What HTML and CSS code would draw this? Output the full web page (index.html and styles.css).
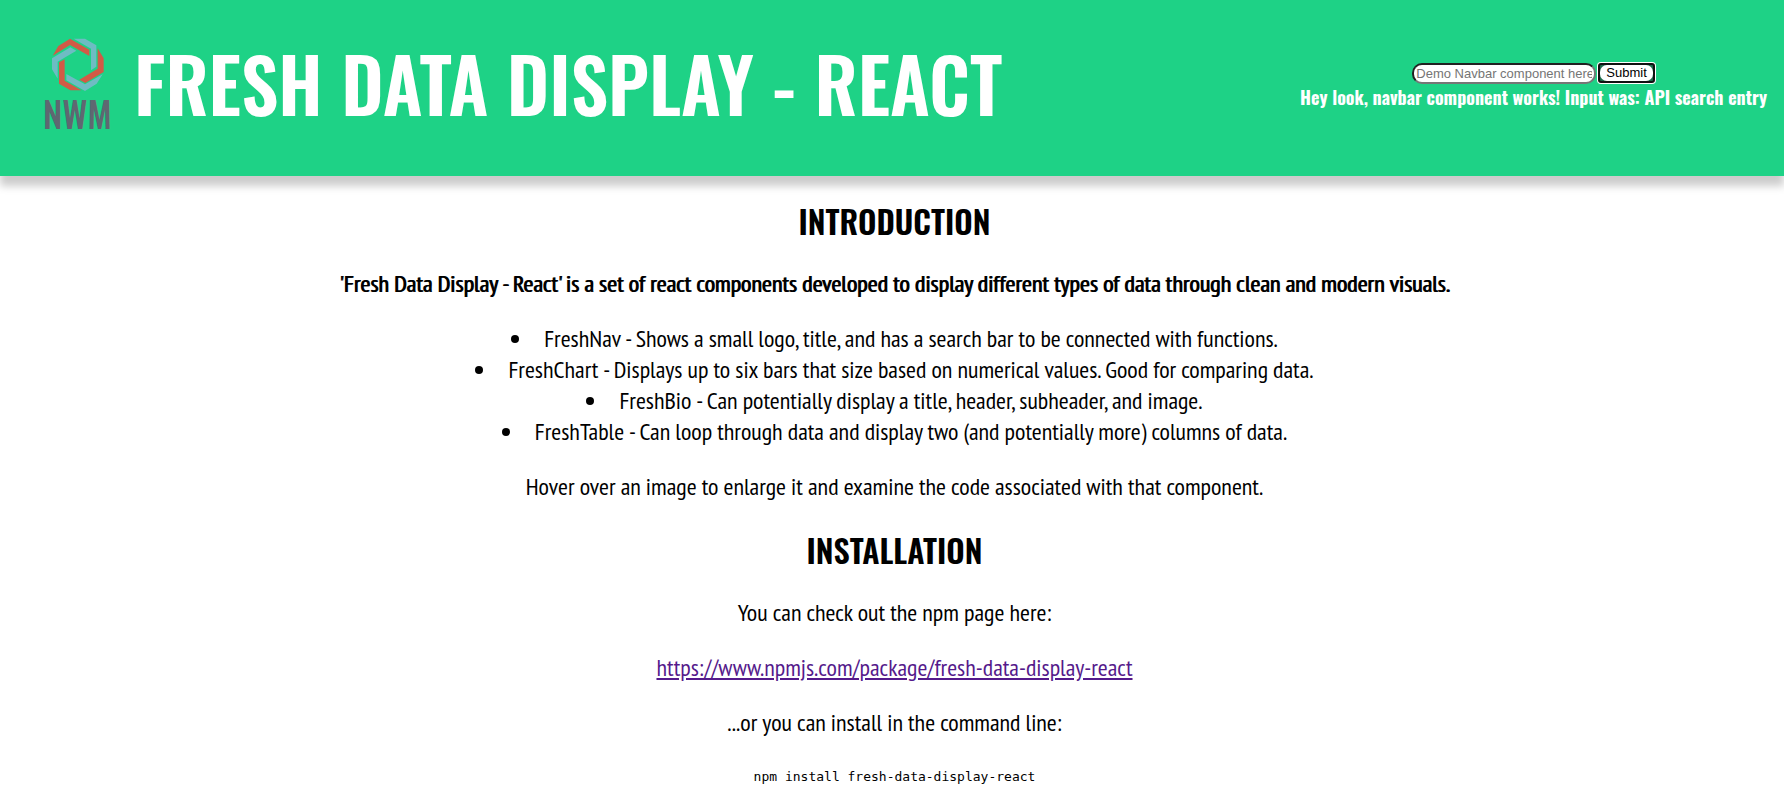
FILE: index.html
```html
<!DOCTYPE html>
<html lang="en">
<head>
<meta charset="utf-8">
<title>Fresh Data Display - React</title>
<link rel="stylesheet" href="styles.css">
</head>
<body>
<header class="navbar">
  <svg class="logo" viewBox="124 110 216 288" role="img" aria-label="NWM">
    <g fill="#d25a46">
      <path d="M159 166 176 137 211 115 269 148V167L211 134Z"/>
      <path d="M178 186 195 177V241L245 270H212L178 250Z"/>
      <path d="M294 144 312 174V215L257 248 239 238 294 205Z"/>
    </g>
    <g fill="#6ebcc3">
      <path d="M157 174 212 141 230 151 174 184V235L157 207Z"/>
      <path d="M200 221 256 252 309 222 291 250 256 272 200 240Z"/>
      <path d="M222 115H256L290 135V199L274 210V145Z"/>
    </g>
    <text class="logo-text" x="233" y="386" text-anchor="middle">NWM</text>
  </svg>
  <h1 class="title">FRESH DATA DISPLAY - REACT</h1>
  <div class="search">
    <form class="search-form">
      <input class="search-input" type="text" aria-label="Search" placeholder="Demo Navbar component here">
      <button class="search-button" type="button"><span class="search-button-face">Submit</span></button>
    </form>
    <p class="search-result">Hey look, navbar component works! Input was: API search entry</p>
  </div>
</header>
<main class="content">
  <h2 class="heading">INTRODUCTION</h2>
  <p class="text lead">'Fresh Data Display - React' is a set of react components developed to display different types of data through clean and modern visuals.</p>
  <ul class="text list">
    <li>FreshNav - Shows a small logo, title, and has a search bar to be connected with functions.</li>
    <li>FreshChart - Displays up to six bars that size based on numerical values. Good for comparing data.</li>
    <li>FreshBio - Can potentially display a title, header, subheader, and image.</li>
    <li>FreshTable - Can loop through data and display two (and potentially more) columns of data.</li>
  </ul>
  <p class="text">Hover over an image to enlarge it and examine the code associated with that component.</p>
  <h2 class="heading">INSTALLATION</h2>
  <p class="text">You can check out the npm page here:</p>
  <p class="text"><a class="link" href="https://www.npmjs.com/package/fresh-data-display-react">https://www.npmjs.com/package/fresh-data-display-react</a></p>
  <p class="text">...or you can install in the command line:</p>
  <code class="command">npm install fresh-data-display-react</code>
</main>
</body>
</html>
```

FILE: styles.css
```css
* { box-sizing: border-box; }

body {
  margin: 0;
  background: #fff;
  color: #000;
  font-family: "PT Sans Narrow", "Liberation Sans Narrow", "Liberation Sans", sans-serif;
}

.navbar {
  display: flex;
  align-items: center;
  min-height: 176px;
  padding: 0 17px 10px 41px;
  background: #1ed286;
  box-shadow: 0 10px 8px #ccc;
  color: #fff;
}

.logo {
  width: 72px;
  height: 96px;
  margin-top: 3px;
  margin-right: 21px;
  flex: none;
  overflow: visible;
}

.logo-text {
  font: 500 106px "Oswald", "Liberation Sans Narrow", "Liberation Sans", sans-serif;
  fill: #5f6771;
}

.title {
  margin: 0;
  font: 600 74px/112px "Oswald", "Liberation Sans Narrow", "Liberation Sans", sans-serif;
  white-space: nowrap;
}

.search {
  margin-left: auto;
  text-align: center;
}

.search-form {
  display: flex;
  justify-content: center;
  align-items: center;
  gap: 2px;
  margin-top: 7px;
}

.search-input {
  width: 184px;
  height: 21px;
  padding: 1px 2px;
  border: 2px inset #767676;
  border-radius: 10px;
  background: #fff;
  font: 13px "Liberation Sans", sans-serif;
}

.search-button {
  padding: 0;
  border: 2px solid #101010;
  border-radius: 3px;
  background: #1f6b4c;
  box-shadow: 0 0 0 1px #fff;
  font: 13px/16px "Liberation Sans", sans-serif;
}

.search-button-face {
  display: block;
  padding: 0 6px;
  border-radius: 7px;
  background: #fff;
}

.search-result {
  margin: 0;
  font: 700 18px/27px "Oswald", "Liberation Sans Narrow", "Liberation Sans", sans-serif;
  white-space: nowrap;
}

.content {
  padding: 21px 8px 16px 13px;
  text-align: center;
}

.heading {
  margin: 0 0 24px;
  font: 600 32px/47px "Oswald", "Liberation Sans Narrow", "Liberation Sans", sans-serif;
}

.text {
  margin: 0 0 24px;
  padding: 0;
  font-size: 24px;
  line-height: 31px;
}

.lead { text-shadow: 1px 0 0 #000; }

.list { list-style-position: inside; }

.link { color: #551a8b; }

.command {
  display: block;
  font: 13px/29px "DejaVu Sans Mono", monospace;
}
```
